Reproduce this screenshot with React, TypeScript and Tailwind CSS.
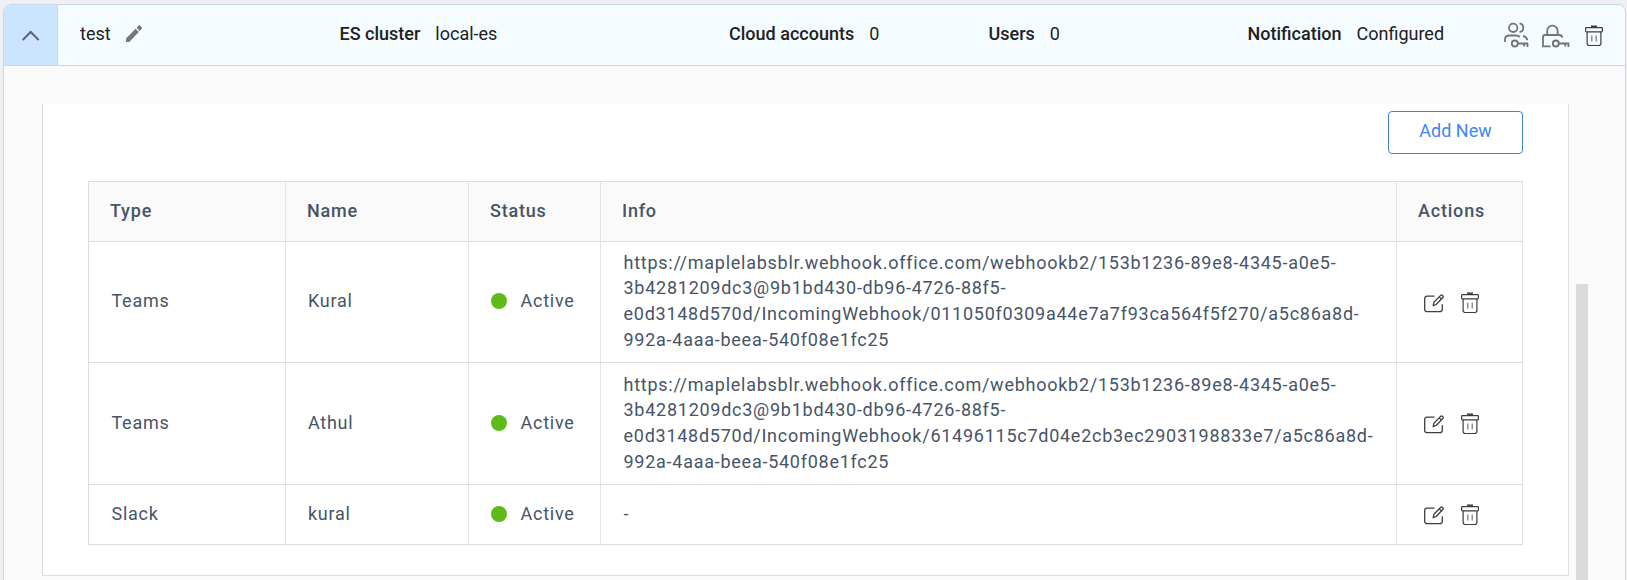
import React from 'react';

const WEBHOOK = 'https://maplelabsblr.webhook.office.com/webhookb2/153b1236-89e8-4345-a0e5-3b4281209dc3@9b1bd430-db96-4726-88f5-e0d3148d570d/IncomingWebhook/';

const channels = [
  { type: 'Teams', name: 'Kural', info: WEBHOOK + '011050f0309a44e7a7f93ca564f5f270/a5c86a8d-992a-4aaa-beea-540f08e1fc25', height: 'h-[121px]', lift: 'pb-[3px]', infoLift: 'pb-[2px]', iconDrop: 'pt-[2px]' },
  { type: 'Teams', name: 'Athul', info: WEBHOOK + '61496115c7d04e2cb3ec2903198833e7/a5c86a8d-992a-4aaa-beea-540f08e1fc25', height: 'h-[122px]', lift: 'pb-[2px]', infoLift: 'pb-[1px]', iconDrop: 'pt-px' },
  { type: 'Slack', name: 'kural', info: '-', height: 'h-[60px]', lift: 'pb-[2px]', infoLift: 'pb-[2px]', iconDrop: 'pt-px' },
];

const GRID = 'grid grid-cols-[197px_183px_132px_796px_126px]';
const CELL = 'flex items-center border-r border-[#e0e4ec]';

function Trash() {
  return (
    <svg width="18" height="22" viewBox="0 0 18 22" fill="none" stroke="#3d3d42" strokeWidth="1.2">
      <path d="M6 1.2h6" strokeWidth="1.5" />
      <rect x="0.6" y="2.6" width="16.8" height="4.3" rx="0.8" />
      <path d="M2.1 6.9v11.4c0 1.4.8 2.2 2.2 2.2h9.4c1.4 0 2.2-.8 2.2-2.2V6.9" />
      <path d="M6.8 10.4v6.2M11.2 10.4v6.2" stroke="#77777c" />
    </svg>
  );
}

function Edit() {
  return (
    <svg width="20" height="19" viewBox="0 0 20 19" fill="none" stroke="#3d3d42" strokeWidth="1.3" strokeLinejoin="round">
      <path d="M10.5 2.1H3A2.3 2.3 0 0 0 .7 4.4v11A2.3 2.3 0 0 0 3 17.7h13a2.3 2.3 0 0 0 2.3-2.3V10.3" />
      <path d="M9.2 11.7l.7-3.4 7-7.2c.7-.7 2.9 1.2 2.2 2.1l-7 7.3zM15.2 2.9l2.3 2.2" />
    </svg>
  );
}

function KeyPart() {
  return (
    <>
      <circle cx="10.8" cy="21.5" r="3" />
      <path d="M13.8 21.5H24.2M20.2 21.5v3M23.5 21.5v3.6" />
    </>
  );
}

function UsersKey() {
  return (
    <svg width="26" height="26" viewBox="0 0 26 26" fill="none" stroke="#6f7477" strokeWidth="1.8">
      <circle cx="9.2" cy="5.8" r="4.2" />
      <path d="M15.5 1.7c5 0 5 8.2 0 8.2" />
      <path d="M1 20v-2.3c0-2.9 1.7-4.2 4.6-4.2h6.6c1.600 0 2.700.6 3.600 1.800M19 14c2.200.5 3.800 1.900 4.300 4.200" />
      <KeyPart />
    </svg>
  );
}

function LockKey() {
  return (
    <svg width="28" height="26" viewBox="0 0 28 26" fill="none" stroke="#6f7477" strokeWidth="1.8">
      <path d="M5.2 13V8.800a5.200 5.200 0 0 1 10.400 0V13" />
      <path d="M8.500 24.400H1V15.200c0-1.500.7-2.200 2.200-2.200h14c1.700 0 2.800.9 3.100 2.700" />
      <g transform="translate(3 0)"><KeyPart /></g>
    </svg>
  );
}

function Stat({ label, value, width }: { label: string; value: string; width: string }) {
  return (
    <div className={`flex shrink-0 gap-[15px] ${width}`}>
      <span className="font-medium">{label}</span>
      <span>{value}</span>
    </div>
  );
}

export default function App() {
  return (
    <div className="h-[580px] w-[1627px] overflow-hidden bg-[#f0f0f4] pl-[3px] pt-1 font-['Roboto',sans-serif] text-[18px]">
      <div className="flex h-[600px] w-[1623px] flex-col overflow-hidden rounded-lg border border-[#c5d9e5] bg-[#fafafa]">
        <header className="flex h-[61px] shrink-0 items-center border-b border-[#c5d9e5] bg-[#f4fcff] text-[#212121]">
          <button className="flex h-full w-[54px] items-center justify-center border-r border-[#c5d9e5] bg-[#cce5ff]">
            <svg width="18" height="11" viewBox="0 0 18 11" fill="none" stroke="#5f6570" strokeWidth="2"><path d="M.7 10l8-8 8 8" /></svg>
          </button>
          <div className="flex h-[60px] items-center pb-[4px] pl-[22px]">
            <div className="flex w-[259.500px] items-center gap-[15px]">
              <span>test</span>
              <svg width="16" height="17" viewBox="0 0 16 17" fill="#777777"><path d="M0 13.500L9.600 3.700l3.200 3.300L3.300 17H0zM10.600 2.700L12.600.6c.5-.5 1-.5 1.500 0l1.500 1.600c.5.5.5 1 0 1.500l-1.900 2.200z" /></svg>
            </div>
            <Stat label="ES cluster" value="local-es" width="w-[389.5px]" />
            <Stat label="Cloud accounts" value="0" width="w-[259.5px]" />
            <Stat label="Users" value="0" width="w-[259px]" />
            <Stat label="Notification" value="Configured" width="w-[256.5px]" />
          </div>
          <div className="flex items-start self-start pt-[17px]">
            <UsersKey />
            <span className="ml-3"><LockKey /></span>
            <span className="ml-[15px] mt-[3px]"><Trash /></span>
          </div>
        </header>
        <div className="flex pl-[38px] pt-[38px]">
          <main className="flex h-[472px] w-[1527px] flex-col border-x border-b border-[#dcdde0] bg-white pl-[45px] pt-[7px]">
            <button className="ml-[1300px] h-[43px] w-[135px] rounded border border-[#3f7fe8] pb-[5px] text-[#4285f4]">Add New</button>
            <div className="mt-[27px] w-[1435px] border-l border-t border-[#d9dce0] tracking-[0.74px] text-[#475467]">
              <div className={`${GRID} h-[60px] border-b border-[#d9dce0] bg-[#fafafa] font-medium tracking-[0.8px]`}>
                {['Type', 'Name', 'Status', 'Info', 'Actions'].map((title) => (
                  <div key={title} className={`${CELL} pb-[2px] pl-[21px]`}>{title}</div>
                ))}
              </div>
              {channels.map((row) => (
                <div key={row.name} className={`${GRID} ${row.height} border-b border-[#d9dce0]`}>
                  <div className={`${CELL} ${row.lift} pl-[22.5px]`}>{row.type}</div>
                  <div className={`${CELL} ${row.lift} pl-[22px]`}>{row.name}</div>
                  <div className={`${CELL} ${row.lift} gap-[13.5px] pl-[22px]`}>
                    <span className="size-4 rounded-full bg-[#5fbb18]" />
                    <span>Active</span>
                  </div>
                  <div className={`${CELL} ${row.infoLift} pl-[22.5px] pr-[20px] leading-[25.74px]`}><span>{row.info}</span></div>
                  <div className={`${CELL} ${row.iconDrop} gap-[17px] pl-[27px]`}><Edit /><Trash /></div>
                </div>
              ))}
            </div>
          </main>
          <div className="ml-[7px] mt-[180px] h-[400px] w-3 shrink-0 bg-[#dadada]" />
        </div>
      </div>
    </div>
  );
}
